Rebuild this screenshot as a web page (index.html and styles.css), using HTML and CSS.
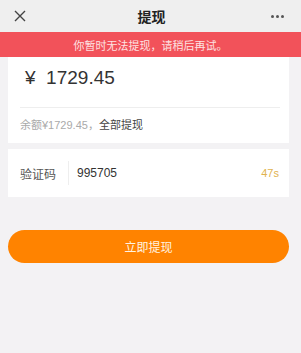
FILE: index.html
```html
<!DOCTYPE html>
<html>
<head>
    <title>提现</title>
    <meta name="viewport" content="width=device-width, initial-scale=1">
    <link rel="stylesheet" href="styles.css">
</head>
<body>

    <div class="topbar">
        <svg class="close" width="12" height="12" viewBox="0 0 12 12">
            <path d="M1 1 L11 11 M11 1 L1 11" stroke="#444" stroke-width="1.4" fill="none"/>
        </svg>
        <div class="title">提现</div>
        <div class="more">
            <span></span><span></span><span></span>
        </div>
    </div>

    <div class="notice">你暂时无法提现，请稍后再试。</div>

    <div class="card amount-card">
        <div class="amount">¥&nbsp;&nbsp;1729.45</div>
        <div class="line"></div>
        <div class="balance">余额¥1729.45，<span class="all">全部提现</span></div>
    </div>

    <div class="card code-card">
        <div class="label">验证码</div>
        <div class="sep"></div>
        <div class="code">995705</div>
        <div class="timer">47s</div>
    </div>

    <button class="submit">立即提现</button>

</body>
</html>
```

FILE: styles.css
```css
* {
    box-sizing: border-box;
}

body {
    margin: 0;
    padding: 0;
    background-color: #f3f2f4;
    font-family: "Liberation Sans", "Noto Sans CJK SC", sans-serif;
    min-height: 100vh;
}

.topbar {
    height: 32px;
    background-color: #efefef;
    display: flex;
    align-items: center;
    justify-content: space-between;
    padding: 0 14px 0 14px;
}

.close {
    display: block;
}

.title {
    font-size: 14px;
    font-weight: bold;
    color: #222;
    margin-left: 6px;
}

.more {
    display: flex;
    gap: 2px;
    width: 16px;
}

.more span {
    width: 3px;
    height: 3px;
    border-radius: 50%;
    background-color: #555;
}

.notice {
    height: 25px;
    background-color: #f2525a;
    color: #fde2e2;
    font-size: 11px;
    display: flex;
    align-items: center;
    justify-content: center;
}

.card {
    background-color: #fff;
    margin: 0 12px 0 8px;
}

.amount-card {
    height: 86px;
    padding: 0 9px 0 12px;
}

.amount {
    height: 42px;
    padding-top: 9px;
    padding-left: 5px;
    font-size: 19px;
    color: #333;
    line-height: 24px;
}

.line {
    height: 1px;
    background-color: #eee;
    margin-top: 8px;
}

.balance {
    margin-top: 8px;
    font-size: 11px;
    color: #aaa;
}

.balance .all {
    color: #444;
}

.code-card {
    margin-top: 6px;
    height: 48px;
    display: flex;
    align-items: center;
    padding: 0 10px 0 12px;
    font-size: 12px;
}

.label {
    color: #555;
    width: 36px;
}

.sep {
    width: 1px;
    height: 24px;
    background-color: #eee;
    margin: 0 8px 0 12px;
}

.code {
    color: #333;
    flex: 1;
}

.timer {
    color: #dfb24e;
    font-size: 11px;
}

.submit {
    display: block;
    margin: 33px 12px 0 8px;
    width: calc(100% - 20px);
    height: 33px;
    border: none;
    border-radius: 17px;
    background-color: #ff8300;
    color: #fff3e2;
    font-family: "Noto Sans CJK SC", sans-serif;
    font-size: 12px;
    cursor: pointer;
}
```
